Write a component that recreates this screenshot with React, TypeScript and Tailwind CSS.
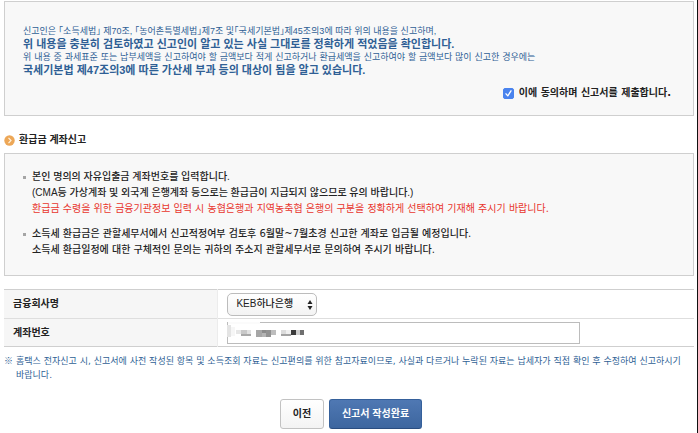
import { useState } from "react"

// grey blocks that hide the account number
const mosaic = [
  { x: 1, y: 0, w: 32, h: 2, c: "#fbfbfb" },
  { x: 0, y: 3, w: 4, h: 12, c: "#e4e4e4" },
  { x: 4, y: 5, w: 4, h: 9, c: "#f6f6f6" },
  { x: 9, y: 8, w: 5, h: 4, c: "#e6e6e6" },
  { x: 14, y: 8, w: 6, h: 4, c: "#c9c9c9" },
  { x: 14, y: 12, w: 10, h: 2, c: "#a9a9a9" },
  { x: 20, y: 8, w: 4, h: 4, c: "#e2e2e2" },
  { x: 29, y: 8, w: 6, h: 7, c: "#a6a6a6" },
  { x: 35, y: 8, w: 4, h: 3, c: "#8b8b8b" },
  { x: 35, y: 11, w: 4, h: 4, c: "#b4b4b4" },
  { x: 39, y: 8, w: 5, h: 7, c: "#929292" },
  { x: 44, y: 8, w: 5, h: 5, c: "#bdbdbd" },
  { x: 54, y: 8, w: 5, h: 4, c: "#dcdcdc" },
  { x: 54, y: 12, w: 10, h: 2, c: "#a3a3a3" },
  { x: 59, y: 8, w: 5, h: 4, c: "#f0f0f0" },
  { x: 64, y: 8, w: 5, h: 5, c: "#3b3b3b" },
  { x: 69, y: 8, w: 4, h: 5, c: "#cfcfcf" },
  { x: 73, y: 8, w: 4, h: 5, c: "#6f6f6f" },
]

export default function App() {
  const [agree, setAgree] = useState(true)

  return (
    <div
      lang="ko"
      className="min-h-screen border-r border-[#111111] bg-white pt-px pl-1 pr-[3px] text-[10px] leading-4 text-[#222222] break-keep font-['Liberation_Sans','Noto_Sans_CJK_KR',sans-serif]"
    >
      {/* Agreement */}
      <section className="border border-[#cfcfcf] bg-[#f8f8f8] px-[18px] pt-[23px] pb-[14px]">
        <div className="text-[9px] leading-[13px] text-[#2f5f95]">
          <p className="[font-feature-settings:'halt']">신고인은 「소득세법」 제70조, 「농어촌특별세법」제7조 및「국세기본법」제45조의3에 따라 위의 내용을 신고하며,</p>
          <p className="text-[11px] font-bold">위 내용을 충분히 검토하였고 신고인이 알고 있는 사실 그대로를 정확하게 적었음을 확인합니다.</p>
          <p className="font-['DejaVu_Sans','Noto_Sans_CJK_KR',sans-serif]">위 내용 중 과세표준 또는 납부세액을 신고하여야 할 금액보다 적게 신고하거나 환급세액을 신고하여야 할 금액보다 많이 신고한 경우에는</p>
          <p className="text-[11px] font-bold">국세기본법 제47조의3에 따른 가산세 부과 등의 대상이 됨을 알고 있습니다.</p>
        </div>
        <div className="mt-2 flex items-center justify-end gap-[5px] pr-1">
          <span className="grid">
            <input
              type="checkbox"
              id="agree"
              checked={agree}
              onChange={(e) => setAgree(e.target.checked)}
              className="peer col-start-1 row-start-1 size-[11px] appearance-none rounded-[2px] border border-[#4a83ee] bg-white checked:bg-[#4a83ee]"
            />
            <svg viewBox="0 0 11 11" className="pointer-events-none invisible col-start-1 row-start-1 size-[11px] peer-checked:visible" aria-hidden="true">
              <path d="M3 5.8 L4.8 7.9 L8 2.8" fill="none" stroke="#ffffff" strokeWidth="1.3" strokeLinecap="round" strokeLinejoin="round" />
            </svg>
          </span>
          <label htmlFor="agree" className="font-bold font-['DejaVu_Sans','Noto_Sans_CJK_KR',sans-serif]">이에 동의하며 신고서를 제출합니다.</label>
        </div>
      </section>

      {/* Refund account */}
      <h2 className="mt-4 flex items-center gap-1 font-bold">
        <svg viewBox="0 0 11 11" className="size-[11px]" aria-hidden="true">
          <circle cx="5.5" cy="5.5" r="5.2" fill="#eda757" />
          <path d="M4.5 2.8 L7 5.5 L4.5 8.2" fill="none" stroke="#fff3df" strokeWidth="1.2" />
        </svg>
        환급금 계좌신고
      </h2>
      <section className="mt-[5px] border border-[#cfcfcf] bg-[#f8f8f8] px-[18px] pt-[15px] pb-[17px] font-medium">
        <ul className="flex flex-col gap-[9px]">
          <li className="flex gap-[6px]">
            <span className="mt-[7px] size-[3px] shrink-0 bg-[#a5a5a5]"></span>
            <div>
              <p>본인 명의의 자유입출금 계좌번호를 입력합니다.</p>
              <p>(CMA등 가상계좌 및 외국계 은행계좌 등으로는 환급금이 지급되지 않으므로 유의 바랍니다.)</p>
              <p className="font-normal text-[#e8362e] font-['DejaVu_Sans','Noto_Sans_CJK_KR',sans-serif]">환급금 수령을 위한 금융기관정보 입력 시 농협은행과 지역농축협 은행의 구분을 정확하게 선택하여 기재해 주시기 바랍니다.</p>
            </div>
          </li>
          <li className="flex gap-[6px]">
            <span className="mt-[7px] size-[3px] shrink-0 bg-[#a5a5a5]"></span>
            <div className="font-['DejaVu_Sans','Noto_Sans_CJK_KR',sans-serif]">
              <p>소득세 환급금은 관할세무서에서 신고적정여부 검토후 6월말~7월초경 신고한 계좌로 입금될 예정입니다.</p>
              <p>소득세 환급일정에 대한 구체적인 문의는 귀하의 주소지 관할세무서로 문의하여 주시기 바랍니다.</p>
            </div>
          </li>
        </ul>
      </section>

      <table className="mt-[13px] w-full border-collapse border-y border-[#cfcfcf]">
        <tbody>
          <tr className="h-[29px] border-b border-[#dedede]">
            <th scope="row" className="w-[31%] border-r border-[#ececec] bg-[#f6f6f6] px-[9px] text-left align-middle font-bold">
              <label htmlFor="bank">금융회사명</label>
            </th>
            <td className="px-[9px] py-0">
              <div className="relative w-[90px]">
                <select id="bank" className="block h-[23px] w-full appearance-none rounded-[5px] border border-[#bcbcbc] bg-linear-to-b from-white to-[#f3f3f3] pl-2 font-medium text-[#222222]">
                  <option>KEB하나은행</option>
                </select>
                <svg viewBox="0 0 6 10" className="pointer-events-none absolute top-[7px] right-[4px] h-[10px] w-[6px]" aria-hidden="true">
                  <path d="M3 0 L5.5 4 L0.5 4 Z M3 10 L5.5 6 L0.5 6 Z" fill="#222222" />
                </svg>
              </div>
            </td>
          </tr>
          <tr className="h-7">
            <th scope="row" className="border-r border-[#ececec] bg-[#f6f6f6] px-[9px] text-left align-middle font-bold">
              <label htmlFor="account">계좌번호</label>
            </th>
            <td className="px-[9px] py-0">
              <div className="relative w-[77%]">
                <input id="account" type="text" className="block h-[22px] w-full border border-[#bcbcbc] bg-white px-1" />
                <svg viewBox="0 0 80 16" className="pointer-events-none absolute top-0 left-0 h-4 w-20" aria-hidden="true">
                  {mosaic.map((m, i) => (
                    <rect key={i} x={m.x} y={m.y} width={m.w} height={m.h} fill={m.c} />
                  ))}
                </svg>
              </div>
            </td>
          </tr>
        </tbody>
      </table>

      <p className="mt-[7px] flex gap-[3px] text-[9px] leading-[14px] text-[#2f5f95]">
        <span>※</span>
        <span className="font-['DejaVu_Sans','Noto_Sans_CJK_KR',sans-serif]">
          홈택스 전자신고 시, 신고서에 사전 작성된 항목 및 소득조회 자료는 신고편의를 위한 참고자료이므로, 사실과 다르거나 누락된 자료는 납세자가 직접 확인 후 수정하여 신고하시기 바랍니다.
        </span>
      </p>

      <div className="mt-[17px] flex justify-center gap-[5px] pb-1 pl-1">
        <button type="button" className="h-[30px] w-11 rounded-[3px] border border-[#c2c2c2] bg-linear-to-b from-white to-[#f3f3f3] font-bold">
          이전
        </button>
        <button type="button" className="h-[30px] rounded-[3px] border border-[#35609b] border-b-[#2a4d80] bg-linear-to-b from-[#4f78b3] to-[#3d669f] px-3 font-bold text-white">
          신고서 작성완료
        </button>
      </div>
    </div>
  )
}
